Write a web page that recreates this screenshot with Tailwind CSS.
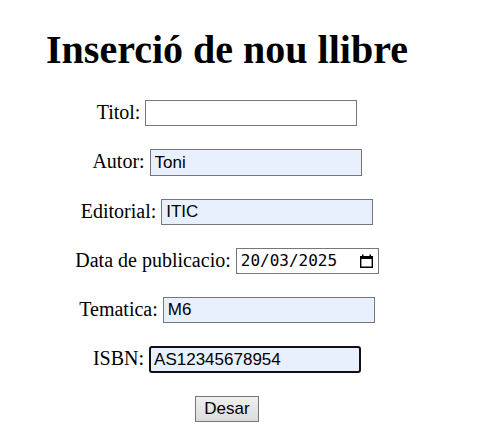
<!DOCTYPE html>
<html lang="ca">
<head>
<meta charset="utf-8">
<meta name="viewport" content="width=device-width, initial-scale=1">
<title>Inserció de nou llibre</title>
<script src="https://cdn.jsdelivr.net/npm/@tailwindcss/browser@4"></script>
</head>
<body class="bg-white text-black font-['Liberation_Serif',serif] text-[20px] leading-[26px] pr-[23px]">
<main class="flex flex-col items-center pt-[27px]">
  <h1 class="text-[40px] leading-[46px] font-bold">Inserció de nou llibre</h1>
  <form class="mt-[27px] flex flex-col items-center gap-[23px]">
    <div class="flex gap-[5px]">
      <label for="titol" class="-mt-px">Titol:</label>
      <input id="titol" type="text" class="h-[26px] w-[212px] border border-[#767676] bg-white px-[4px] font-['Liberation_Sans',sans-serif] text-[17px] outline-none">
    </div>
    <div class="flex gap-[5px]">
      <label for="autor" class="-mt-px">Autor:</label>
      <input id="autor" type="text" value="Toni" class="h-[27px] w-[212px] border border-[#767676] bg-[#e8f0fe] px-[4px] font-['Liberation_Sans',sans-serif] text-[17px] outline-none">
    </div>
    <div class="flex gap-[5px]">
      <label for="editorial" class="-mt-px">Editorial:</label>
      <input id="editorial" type="text" value="ITIC" class="h-[26px] w-[212px] border border-[#767676] bg-[#e8f0fe] px-[4px] font-['Liberation_Sans',sans-serif] text-[17px] outline-none">
    </div>
    <div class="flex gap-[5px]">
      <label for="data" class="-mt-px">Data de publicacio:</label>
      <div class="flex h-[26px] w-[143px] items-center justify-between border border-[#767676] bg-white pl-[4px] pr-[5px]">
        <input id="data" type="text" inputmode="numeric" value="20/03/2025" class="w-[104px] font-['DejaVu_Sans_Mono',monospace] text-[16px] leading-[24px] outline-none">
        <button type="button" aria-label="Obre el calendari" class="block">
          <svg class="block" width="13" height="15" viewBox="0 0 13 15" fill="none"><path d="M.7 2.7h11.6v10.6H.7z" stroke="#000" stroke-width="1.4"/><path d="M0 2h13v3H0zM2 .5h1.5V2H2zM9.500.5H11V2H9.500z" fill="#000"/></svg>
        </button>
      </div>
    </div>
    <div class="flex gap-[5px]">
      <label for="tematica" class="-mt-px">Tematica:</label>
      <input id="tematica" type="text" value="M6" class="h-[26px] w-[212px] border border-[#767676] bg-[#e8f0fe] px-[4px] font-['Liberation_Sans',sans-serif] text-[17px] outline-none">
    </div>
    <div class="flex gap-[5px]">
      <label for="isbn" class="-mt-px">ISBN:</label>
      <input id="isbn" type="text" value="AS12345678954" class="h-[27px] w-[212px] rounded-[3px] border-2 border-[#101010] bg-[#e8f0fe] px-[3px] font-['Liberation_Sans',sans-serif] text-[17px] outline-none">
    </div>
    <button type="submit" class="h-[26px] w-[64px] border border-[#767676] bg-linear-to-b from-[#efefef] to-[#dcdcdc] font-['Liberation_Sans',sans-serif] text-[17px] leading-[24px]">Desar</button>
  </form>
</main>
</body>
</html>
